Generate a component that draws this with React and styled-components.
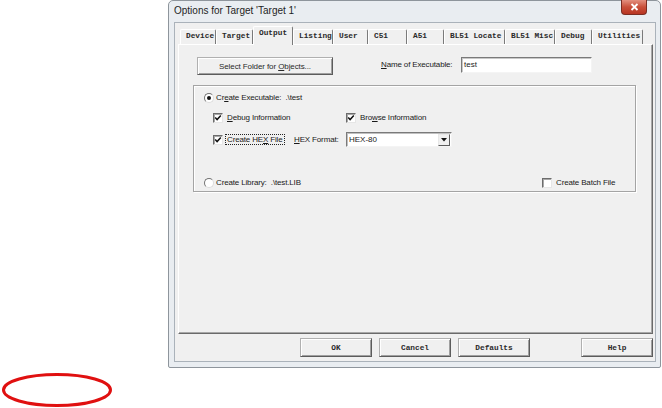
import React from "react";
import styled, { createGlobalStyle } from "styled-components";

const GlobalStyle = createGlobalStyle`
  html, body {
    margin: 0;
    padding: 0;
    background: #fff;
  }
  body {
    font-family: "Liberation Sans", Arial, sans-serif;
  }
`;

const Page = styled.div`
  width: 662px;
  height: 408px;
  overflow: hidden;
  display: flex;
  flex-direction: column;
  align-items: flex-start;
`;

const Window = styled.div`
  margin-left: 168px;
  width: 493px;
  height: 368px;
  box-sizing: border-box;
  border: 1px solid #8e959c;
  border-radius: 5px 5px 2px 2px;
  background: #e9edf1;
  display: flex;
  flex-direction: column;
`;

const TitleBar = styled.div`
  height: 21px;
  display: flex;
  align-items: flex-start;
  padding: 0 13px 0 5px;
`;

const Title = styled.span`
  font-size: 10px;
  line-height: 20px;
  color: #1e1e1e;
  white-space: nowrap;
`;

const CloseButton = styled.div`
  margin-left: auto;
  margin-top: -1px;
  width: 26px;
  height: 15px;
  box-sizing: border-box;
  background: linear-gradient(#e3907f, #c9503a 50%, #b83522);
  border: 1px solid #7b2d22;
  border-top: none;
  border-radius: 0 0 4px 4px;
  display: flex;
  align-items: center;
  justify-content: center;
`;

const Client = styled.div`
  flex: 1;
  margin: 0 4px 5px 5px;
  border: 1px solid #aab2ba;
  background: #f0f0f0;
  display: flex;
  flex-direction: column;
  padding: 3px 2px 4px 3px;
`;

const TabStrip = styled.div`
  height: 18px;
  display: flex;
  align-items: flex-end;
  padding-left: 2px;
  position: relative;
  z-index: 1;
`;

const Tab = styled.div`
  box-sizing: border-box;
  width: ${(p) => p.$w}px;
  height: ${(p) => (p.$active ? 19 : 15)}px;
  margin-bottom: ${(p) => (p.$active ? -1 : 0)}px;
  padding-left: 5px;
  border-top: 1px solid #fff;
  border-left: 1px solid #fff;
  border-right: 1px solid #7a7a7a;
  border-radius: 2px 2px 0 0;
  background: #f0f0f0;
  font: bold 7.8px/13px "Liberation Mono", monospace;
  color: #2a2a2a;
  white-space: nowrap;
`;

const TabPage = styled.div`
  flex: 1;
  border-top: 1px solid #fff;
  border-left: 1px solid #fff;
  border-right: 1px solid #6a6a6a;
  border-bottom: 1px solid #6a6a6a;
  box-shadow: inset -1px -1px #a8a8a8;
  display: flex;
  flex-direction: column;
  padding: 12px 0 0 14px;
`;

const TopRow = styled.div`
  display: flex;
  align-items: flex-start;
  margin-left: 4px;
  height: 18px;
`;

const PushButton = styled.button`
  display: block;
  box-sizing: border-box;
  width: ${(p) => p.$w}px;
  height: ${(p) => p.$h}px;
  margin: 0;
  padding: 0;
  background: #f0f0f0;
  border: 1px solid;
  border-color: #b0b0b0 #5c5c5c #5c5c5c #b0b0b0;
  box-shadow: inset 1px 1px #fff, inset -1px -1px #a0a0a0;
  color: #2a2a2a;
  font: ${(p) =>
    p.$mono
      ? 'bold 7.8px "Liberation Mono", monospace'
      : '8px "Liberation Sans", Arial, sans-serif'};
  letter-spacing: ${(p) => (p.$mono ? 0 : -0.1)}px;
`;

const Label = styled.span`
  display: inline-block;
  width: ${(p) => (p.$w ? `${p.$w}px` : "auto")};
  margin-left: ${(p) => p.$ml || 0}px;
  font-size: 8px;
  line-height: ${(p) => p.$lh || 12}px;
  letter-spacing: -0.15px;
  color: #1a1a1a;
  white-space: nowrap;
`;

const Key = styled.span`
  text-decoration: underline;
`;

const TextInput = styled.div`
  box-sizing: border-box;
  width: 131px;
  height: 16px;
  background: #fff;
  border: 1px solid;
  border-color: #7a7a7a #f4f4f4 #f4f4f4 #7a7a7a;
  box-shadow: inset 1px 1px #c8c8c8;
  padding-left: 2px;
  font-size: 8px;
  line-height: 13px;
  color: #1a1a1a;
`;

const GroupBox = styled.div`
  margin-top: 10px;
  width: 443px;
  height: 107px;
  box-sizing: border-box;
  border: 1px solid #a4a4a4;
  box-shadow: inset 1px 1px #fff, 1px 1px #fff;
  display: flex;
  flex-direction: column;
  padding: 6px 17px 2px 10px;
`;

const Row = styled.div`
  display: flex;
  align-items: center;
  height: ${(p) => p.$h || 12}px;
  margin-top: ${(p) => p.$mt || 0}px;
  margin-left: ${(p) => p.$ml || 0}px;
`;

const BottomRow = styled(Row)`
  margin-top: auto;
  justify-content: space-between;
`;

const Item = styled.div`
  display: flex;
  align-items: center;
  width: ${(p) => (p.$w ? `${p.$w}px` : "auto")};
  gap: ${(p) => p.$gap || 4}px;
`;

const Box = styled.span`
  flex: none;
  width: 10px;
  height: 10px;
  box-sizing: border-box;
  background: #fff;
  border: 1px solid;
  border-color: #6c6c6c #e6e6e6 #e6e6e6 #6c6c6c;
  box-shadow: inset 1px 1px #a8a8a8;
  display: inline-flex;
  align-items: center;
  justify-content: center;
`;

const Radio = styled.span`
  flex: none;
  width: 10px;
  height: 10px;
  box-sizing: border-box;
  border-radius: 50%;
  background: #fff;
  border: 1px solid;
  border-color: #727272 #dcdcdc #dcdcdc #727272;
  display: inline-flex;
  align-items: center;
  justify-content: center;
  &::after {
    content: "";
    display: ${(p) => (p.$on ? "block" : "none")};
    width: 4px;
    height: 4px;
    border-radius: 50%;
    background: #111;
  }
`;

const Focus = styled.span`
  border: 1px dotted #222;
  padding: 0 1px;
  line-height: 11px;
`;

const Select = styled.div`
  box-sizing: border-box;
  width: 106px;
  height: 15px;
  background: #fff;
  border: 1px solid;
  border-color: #7a7a7a #f4f4f4 #f4f4f4 #7a7a7a;
  box-shadow: inset 1px 1px #c0c0c0;
  display: flex;
  align-items: stretch;
  padding: 1px 1px 0 2px;
  font-size: 8px;
  line-height: 12px;
  color: #1a1a1a;
`;

const SelectValue = styled.span`
  flex: 1;
`;

const DropButton = styled.span`
  width: 12px;
  height: 12px;
  box-sizing: border-box;
  background: #f0f0f0;
  border: 1px solid;
  border-color: #e8e8e8 #5c5c5c #5c5c5c #e8e8e8;
  display: flex;
  align-items: center;
  justify-content: center;
`;

const ButtonRow = styled.div`
  margin-top: 4px;
  height: 19px;
  display: flex;
  align-items: flex-start;
  gap: 7px;
  padding-left: 122px;
`;

const HelpSlot = styled.div`
  margin-left: auto;
  display: flex;
`;

const Annotation = styled.svg`
  margin-top: 4px;
  display: block;
`;

const tabs = [
  ["Device", 36],
  ["Target", 37],
  ["Output", 40],
  ["Listing", 40],
  ["User", 35],
  ["C51", 39],
  ["A51", 37],
  ["BL51 Locate", 61],
  ["BL51 Misc", 50],
  ["Debug", 37],
  ["Utilities", 51],
];

const Check = ({ on }) => (
  <Box>
    {on && (
      <svg width="8" height="8" viewBox="0 0 8 8">
        <path d="M1.2 3.6 L3.1 5.6 L6.8 1.6" fill="none" stroke="#111" strokeWidth="1.5" />
      </svg>
    )}
  </Box>
);

const App = () => {
  return (
    <Page>
      <GlobalStyle />
      <Window>
        <TitleBar>
          <Title>Options for Target 'Target 1'</Title>
          <CloseButton>
            <svg width="9" height="8" viewBox="0 0 9 8">
              <path d="M1.5 1 L7.5 7 M7.5 1 L1.5 7" stroke="#fff" strokeWidth="1.8" />
            </svg>
          </CloseButton>
        </TitleBar>
        <Client>
          <TabStrip>
            {tabs.map(([name, w]) => (
              <Tab key={name} $w={w} $active={name === "Output"}>
                {name}
              </Tab>
            ))}
          </TabStrip>
          <TabPage>
            <TopRow>
              <PushButton $w={136} $h={18}>
                Select Folder for <Key>O</Key>bjects...
              </PushButton>
              <Label $ml={48} $w={80} $lh={16}>
                <Key>N</Key>ame of Executable:
              </Label>
              <TextInput>test</TextInput>
            </TopRow>
            <GroupBox>
              <Row>
                <Item $gap={2}>
                  <Radio $on />
                  <Label>
                    Cr<Key>e</Key>ate Executable:&nbsp; .\test
                  </Label>
                </Item>
              </Row>
              <Row $mt={8} $ml={9}>
                <Item $w={133}>
                  <Check on />
                  <Label>
                    <Key>D</Key>ebug Information
                  </Label>
                </Item>
                <Item>
                  <Check on />
                  <Label>
                    Bro<Key>w</Key>se Information
                  </Label>
                </Item>
              </Row>
              <Row $mt={8} $ml={9} $h={15}>
                <Item $w={81} $gap={2}>
                  <Check on />
                  <Label>
                    <Focus>
                      Create HE<Key>X</Key> File
                    </Focus>
                  </Label>
                </Item>
                <Label $w={52}>
                  <Key>H</Key>EX Format:
                </Label>
                <Select>
                  <SelectValue>HEX-80</SelectValue>
                  <DropButton>
                    <svg width="6" height="4" viewBox="0 0 6 4">
                      <path d="M0 0 H6 L3 3.5 Z" fill="#111" />
                    </svg>
                  </DropButton>
                </Select>
              </Row>
              <BottomRow>
                <Item $gap={2}>
                  <Radio />
                  <Label>Create Library:&nbsp; .\test.LIB</Label>
                </Item>
                <Item $w={76}>
                  <Check />
                  <Label>Create Batch File</Label>
                </Item>
              </BottomRow>
            </GroupBox>
          </TabPage>
          <ButtonRow>
            <PushButton $w={72} $h={19} $mono>OK</PushButton>
            <PushButton $w={72} $h={19} $mono>Cancel</PushButton>
            <PushButton $w={72} $h={19} $mono>Defaults</PushButton>
            <HelpSlot>
              <PushButton $w={72} $h={19} $mono>Help</PushButton>
            </HelpSlot>
          </ButtonRow>
        </Client>
      </Window>
      <Annotation width="114" height="36" viewBox="0 0 114 36">
        <ellipse cx="57" cy="18" rx="53.5" ry="15.5" fill="none" stroke="#e01010" strokeWidth="3" />
      </Annotation>
    </Page>
  );
};

export default App;
